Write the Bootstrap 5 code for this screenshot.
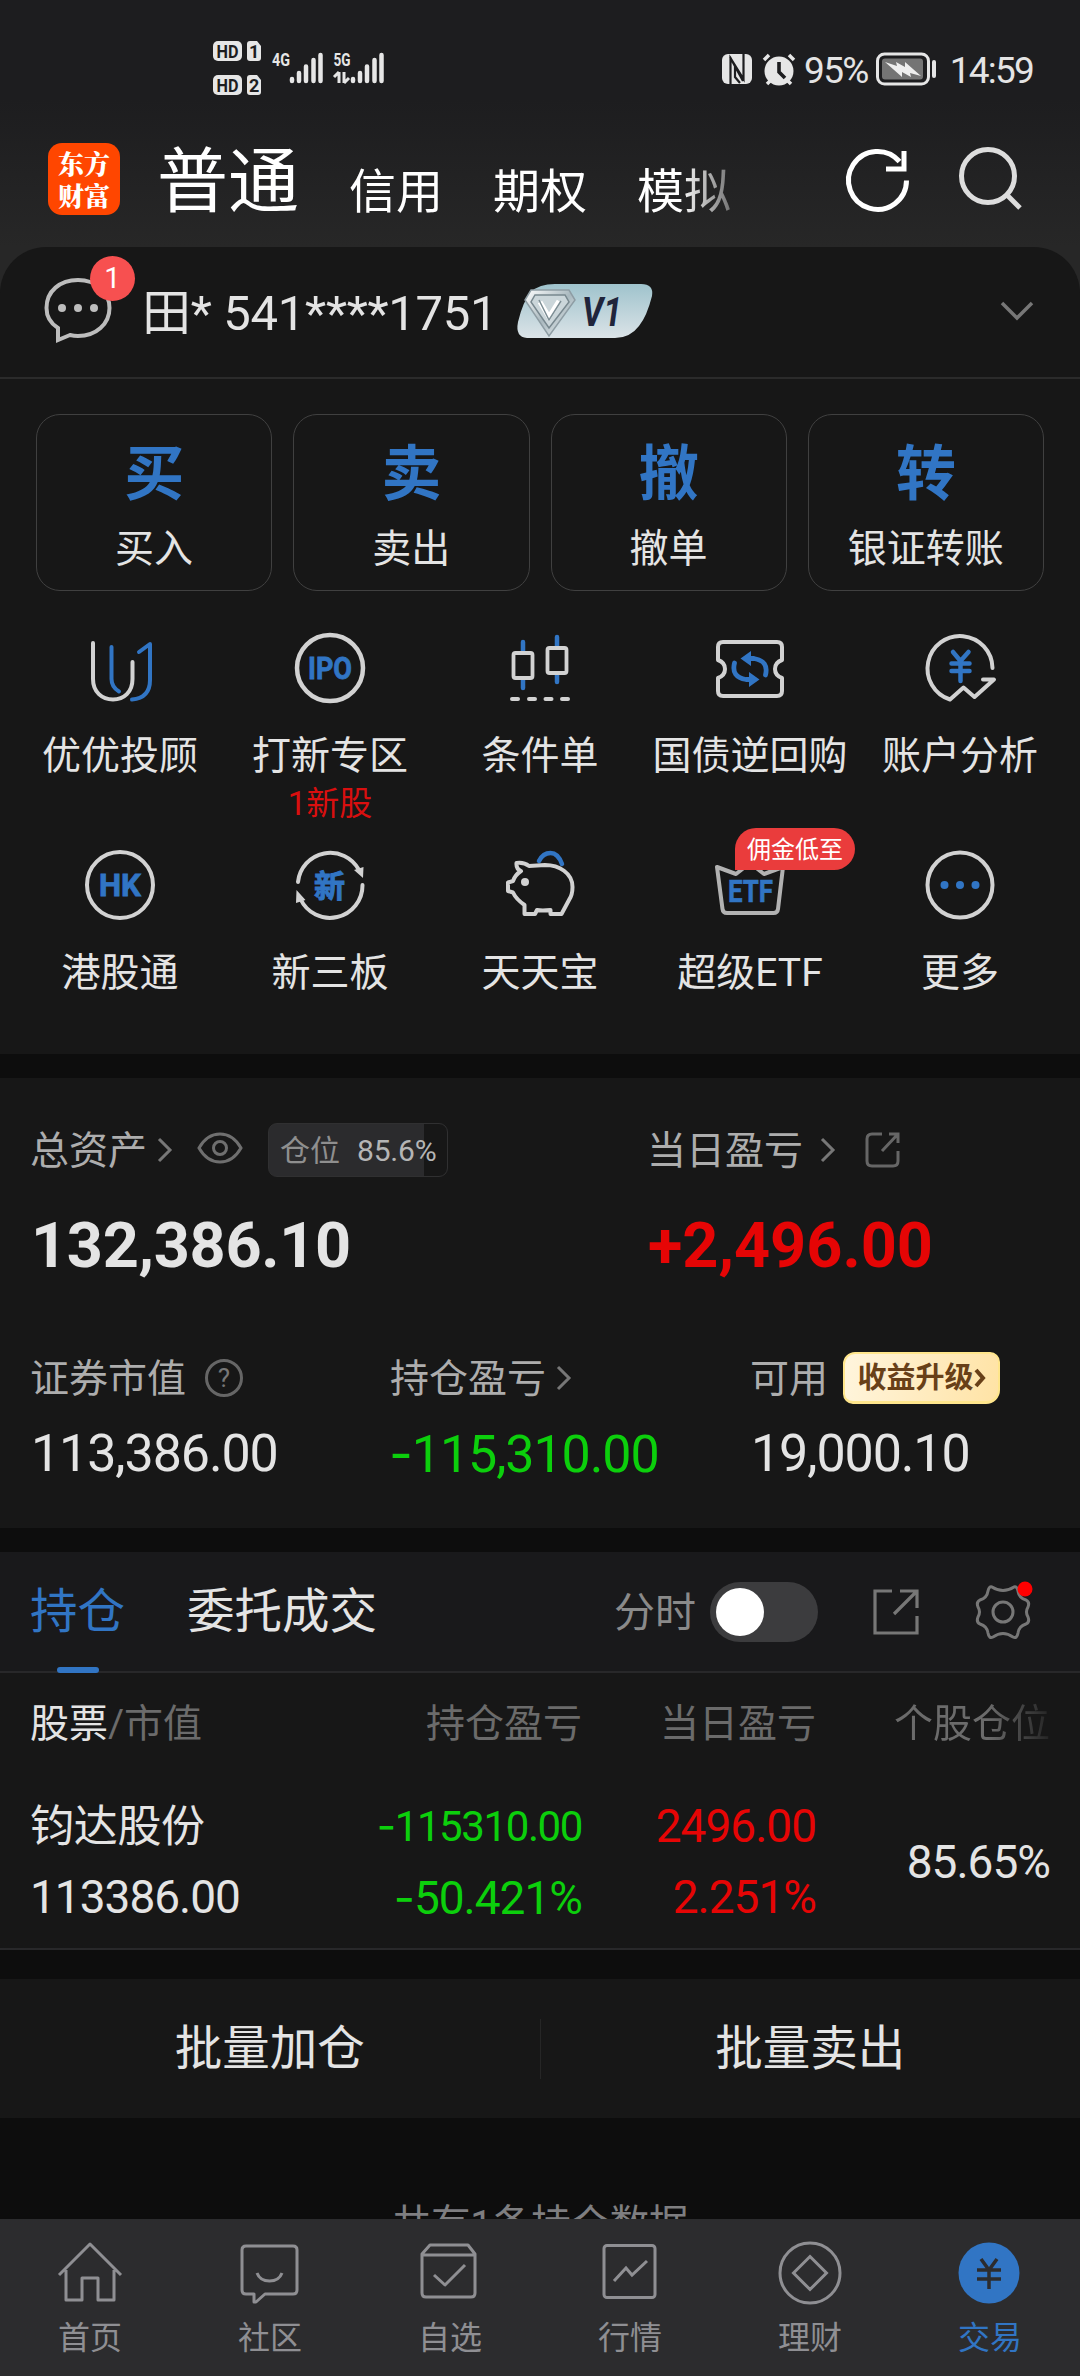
<!DOCTYPE html>
<html lang="zh-CN" data-bs-theme="dark">
<head>
<meta charset="utf-8">
<meta name="viewport" content="width=device-width, initial-scale=1">
<title>交易</title>
<link href="https://cdn.jsdelivr.net/npm/bootstrap@5.3.0/dist/css/bootstrap.min.css" rel="stylesheet">
<style>
:root{--blue:#3175c4;--txt:#e4e4e4;--label:#adadad;--dim:#6b6b6b;--up:#e60505;--down:#0ccf0c}
html{height:2376px;overflow:hidden}
body{background:#0d0d0d;color:var(--txt);font-family:Roboto,"Noto Sans CJK SC",sans-serif;line-height:1;width:1080px;height:2376px;overflow:hidden;white-space:nowrap}
svg{display:block;flex:none;overflow:visible;fill:none}
.screen{height:2376px}
.top-zone{background:linear-gradient(#1d1d1f 0,#1d1d1f 100px,#272727 247px);height:292px}
.status{height:110px;padding:24px 47px 0 213px;font-size:37px}
.brand-row{height:137px;padding:0 56px 0 48px}
.logo{width:72px;height:72px;margin-top:33px;border-radius:14px;background:#ff4600;color:#fff;font-family:"Noto Serif CJK SC","Noto Sans CJK SC",serif;font-weight:900;font-size:26px;padding:5px 0}
.logo span{line-height:30px;height:30px}
.tabs-mkt{padding-left:37px;gap:50px;width:612px;overflow:hidden;height:137px;color:#fff;font-size:47px;-webkit-mask-image:linear-gradient(90deg,#000 560px,transparent 640px)}
.tabs-mkt>span{padding-top:58px}
.tabs-mkt>.cur{font-size:71px;padding-top:36px}
.panel-a,.panel-b{background:#171717}
.panel-a{margin-top:-45px;border-radius:46px 46px 0 0;height:807px}
.acct{height:132px;border-bottom:2px solid #2b2b2b;padding:0 46px 0 44px}
.msg-dot{left:46px;top:-25px;width:45px;height:45px;background:#f75050;color:#fff;font-size:29px}
.acct-no{font-size:49px;padding:3px 0 0 30px;letter-spacing:-.3px}
.quick{padding:35px 36px 0;gap:21px}
.q-btn{height:177px;border:1.5px solid #404040;border-radius:24px;flex:1 1 0;padding-top:30px}
.q-btn b{font-size:60px;color:var(--blue);font-weight:700}
.q-btn span{font-size:39px;margin-top:25px}
.tools{padding:41px 15px 0}
.tool{width:210px;height:217px}
.tool .nm{font-size:39px;margin-top:33px}
.tool .sub{font-size:33px;margin-top:11px;color:#d90f0f}
.promo{left:90px;top:-21px;width:120px;height:42px;background:#ea3c3c;border-radius:21px 21px 21px 0;color:#fff;font-size:24px;padding-top:1px}
.ic-t{font-family:Roboto,"Noto Sans CJK SC",sans-serif;font-weight:700;fill:var(--blue);stroke:var(--blue)}
.assets{margin-top:24px;height:450px;padding:0 31px}
.lbl{font-size:39px;color:var(--label);padding-top:2px;margin-left:-1px}
.pos-chip{width:180px;height:54px;margin-left:25px;border:1.5px solid #303031;border-radius:9px;font-size:30px;color:#8f8f8f;padding:2px 0 0 11px;background:linear-gradient(90deg,#2b2b2d 155px,#171717 155px)}
.pos-chip i{font-style:normal;color:#b5b5b5;margin-left:17px;font-size:30px;letter-spacing:-.2px}
.big{font-size:63px;font-weight:700;letter-spacing:-.3px}
.mid{font-size:52px;letter-spacing:-1.1px}
.minus{font-family:Inter,sans-serif}
.up{color:var(--up)}.down{color:var(--down)}
.gain{width:157px;height:52px;margin-left:15px;border-radius:12px 10px 14px 10px;background:linear-gradient(100deg,#fff5dd,#ffe3a5);border:2px solid #ffe68c;border-bottom-width:3px;color:#684018;font-size:29px;font-weight:700;padding-top:1px}
.hold{margin-top:24px}
.hold-tabs{height:121px;background:#19191b;border-bottom:2px solid #28282a;padding:0 30px}
.hold-tabs .tb{font-size:47.5px;padding-top:3px}
.bar{left:27px;bottom:-36px;width:42px;height:6px;border-radius:3px;background:var(--blue)}
.sw{width:108px;height:60px;border-radius:30px;background:#3c3c3e;padding:6px;margin-left:14px}
.sw div{width:48px;height:48px;border-radius:50%;background:#fff}
.g-row{display:grid;grid-template-columns:251px 301px 234px 234px;padding-left:30px}
.g-head{height:102px;font-size:39px;color:var(--dim);align-items:center}
.fade-r{-webkit-mask-image:linear-gradient(90deg,#000 60%,transparent 108%)}
.g-body{height:175px;border-bottom:2px solid #28282a;font-size:46px;letter-spacing:-1px}
.g-body>div{padding-top:28px}
.g-body .l2{margin-top:25px}
.batch{margin-top:29px;height:139px;font-size:47.5px}
.batch .flex-fill{padding-top:2px}
.batch .vr-l{width:1px;height:60px;background:#262626}
.foot-note{height:101px;padding-top:87px;font-size:39.5px;color:#7e7e80;letter-spacing:-.3px}
.bottom-nav{height:157px;background:#2c2c2e;position:relative}
.bottom-nav .it{width:180px;padding-top:22px;font-size:32px;color:#8f8f93}
.bottom-nav .it span{margin-top:17px}
.bottom-nav .it.on{color:var(--blue)}
</style>
<script src="https://cdn.jsdelivr.net/npm/bootstrap@5.3.0/dist/js/bootstrap.bundle.min.js"></script>
</head>
<body>
<div class="screen d-flex flex-column overflow-hidden">
<header class="top-zone flex-shrink-0">
  <div class="status d-flex justify-content-between">
    <svg width="176" height="90" viewBox="0 0 176 90">
      <g fill="#e6e6e6"><rect x="0" y="17" width="29" height="20" rx="5"/><path d="M37 17h7l4 5v12q0 3-3 3h-8q-3 0-3-3V20q0-3 3-3z"/><rect x="0" y="51" width="29" height="20" rx="5"/><path d="M37 51h7l4 5v12q0 3-3 3h-8q-3 0-3-3V54q0-3 3-3z"/></g>
      <g font-family="Roboto" font-weight="700" font-size="18" fill="#1d1d1f"><text x="3.500" y="33.500" textLength="22" lengthAdjust="spacingAndGlyphs">HD</text><text x="36" y="33.500">1</text><text x="3.500" y="67.500" textLength="22" lengthAdjust="spacingAndGlyphs">HD</text><text x="36" y="67.500">2</text></g>
      <g font-family="Roboto" font-weight="700" font-size="19" fill="#e6e6e6"><text x="59" y="42" textLength="18" lengthAdjust="spacingAndGlyphs">4G</text><text x="120.500" y="42" textLength="17" lengthAdjust="spacingAndGlyphs">5G</text></g>
      <g stroke="#e6e6e6" stroke-width="4.500" stroke-linecap="round"><path d="M79 55v2M86 49v8M93 42.500v14.500M100.500 36v21M107.500 31v26M140 55v2M147 49v8M154 42.500v14.500M161.500 36v21M168.500 31v26"/></g>
      <path d="M126 48v11M121 53l5-5M131 48v11M131 59l5-5" stroke="#e6e6e6" stroke-width="3"/>
    </svg>
    <div class="d-flex align-items-center" style="height:90px">
      <svg width="30" height="30" viewBox="0 0 30 30"><rect width="30" height="30" rx="6" fill="#e6e6e6"/><path d="M8.500 30V4l13 21V0M8 3l13 24M13 12v11l5 6" stroke="#1d1d1f" stroke-width="2.200"/></svg>
      <svg class="ms-2" width="38" height="34" viewBox="0 0 38 34"><circle cx="19" cy="19" r="14.500" fill="#e6e6e6"/><path d="M4 8l5-5M34 8l-5-5M7 32l4-4M31 32l-4-4" stroke="#e6e6e6" stroke-width="3.500"/><path d="M19 10v10l6 6" stroke="#1d1d1f" stroke-width="3.600"/></svg>
      <span style="margin-left:6px;letter-spacing:-1.6px;padding-top:3px">95%</span>
      <svg style="margin-left:8px" width="62" height="34" viewBox="0 0 62 34"><rect x="1.500" y="2" width="51" height="30" rx="7" stroke="#e6e6e6" stroke-width="3"/><rect x="6" y="6.500" width="41" height="21" rx="3" fill="#747474"/><path d="M9 10l12 4-1-4 9 5v-5l16 14-11-3 1 4-9-5v5z" fill="#eee"/><path d="M58 10v14" stroke="#e6e6e6" stroke-width="4" stroke-linecap="round"/></svg>
      <span style="margin-left:12px;letter-spacing:-1.8px;padding-top:3px">14:59</span>
    </div>
  </div>
  <div class="brand-row d-flex">
    <div class="logo d-flex flex-column align-items-center justify-content-between flex-shrink-0"><span>东方</span><span>财富</span></div>
    <div class="tabs-mkt d-flex flex-shrink-0"><span class="cur">普通</span><span>信用</span><span>期权</span><span>模拟</span></div>
    <svg class="ms-auto" width="182" height="80" viewBox="0 0 182 80" style="margin-top:30px">
      <path d="M64.500 40.500a29 29 0 1 1-7-19" stroke="#fff" stroke-width="5"/><path d="M62 11v18H44" stroke="#fff" stroke-width="5"/>
      <circle cx="146" cy="36" r="26.500" stroke="#ddd" stroke-width="5"/><path d="M165 55l13 13" stroke="#ddd" stroke-width="5"/>
    </svg>
  </div>
</header>

<section class="panel-a flex-shrink-0">
  <div class="acct d-flex align-items-center">
    <div class="position-relative">
      <svg width="68" height="66" viewBox="0 0 68 66" style="margin-top:-4px"><path d="M14 63V51C6 46 2.500 39 2.500 31 2.500 14 16 3 34 3S65.500 15 65.500 31 52 59 34 59q-4 0-8-1z" stroke="#bdbdbd" stroke-width="4"/><g fill="#bdbdbd"><circle cx="18" cy="31" r="4"/><circle cx="34" cy="31" r="4"/><circle cx="50" cy="31" r="4"/></g></svg>
      <div class="msg-dot position-absolute rounded-circle d-flex align-items-center justify-content-center">1</div>
    </div>
    <div class="acct-no">田* 541****1751</div>
    <svg style="margin-left:20px;margin-top:-2px" width="136" height="54" viewBox="0 0 136 54">
      <defs><linearGradient id="v" x2="0" y2="1"><stop stop-color="#9fc3cc"/><stop offset="1" stop-color="#dbe3e7"/></linearGradient><linearGradient id="d" x2="1" y2="1"><stop stop-color="#fff"/><stop offset=".5" stop-color="#a9b8be"/><stop offset="1" stop-color="#eef3f5"/></linearGradient></defs>
      <path d="M38 0h86q13 0 11 12-5 20-13 30-9 12-24 12H10Q-2 53 1 38 6 17 14 8q8-8 24-8z" fill="url(#v)"/>
      <path d="M14 6h38l6 10-26 36L8 16z" fill="url(#d)" stroke="#8e9da4" stroke-width="1.500"/><path d="M18 11h30l4 7-20 26-18-26z" fill="#cbd6da" stroke="#78888f" stroke-width="1.500"/><path d="M23 18l9 15 10-16" stroke="#fff" stroke-width="5"/><path d="M22 16l10 20 12-19" stroke="#7d8e95" stroke-width="1.500"/>
      <text x="65" y="42" font-family="Roboto" font-size="40" font-weight="700" font-style="italic" fill="#20253b" textLength="40" lengthAdjust="spacingAndGlyphs">V1</text>
    </svg>
    <svg class="ms-auto" width="34" height="22" viewBox="0 0 34 22" style="margin-top:-3px"><path d="M2 3l15 15L32 3" stroke="#777" stroke-width="3.500"/></svg>
  </div>
  <div class="quick d-flex">
    <div class="q-btn d-flex flex-column align-items-center"><b>买</b><span>买入</span></div>
    <div class="q-btn d-flex flex-column align-items-center"><b>卖</b><span>卖出</span></div>
    <div class="q-btn d-flex flex-column align-items-center"><b>撤</b><span>撤单</span></div>
    <div class="q-btn d-flex flex-column align-items-center"><b>转</b><span>银证转账</span></div>
  </div>
  <div class="tools d-flex flex-wrap">
    <div class="tool d-flex flex-column align-items-center"><svg width="72" height="72" stroke-width="4" stroke-linecap="round" stroke-linejoin="round"><path stroke="#3175c4" d="M27.500 15v32q0 8 7.500 12.500M48 67.500Q66 66 66 48V12L55 20"/><path stroke="#d2d2d2" d="M9 11v36C9 60 18 67.500 29 67.500S48.500 60 48.500 47V30"/></svg><span class="nm">优优投顾</span></div>
    <div class="tool d-flex flex-column align-items-center"><svg width="72" height="72"><circle cx="36" cy="36" r="33" stroke="#d2d2d2" stroke-width="4.500"/><text class="ic-t" x="14" y="47" font-size="31" stroke-width=".8" textLength="44" lengthAdjust="spacingAndGlyphs">IPO</text></svg><span class="nm">打新专区</span><span class="sub">1新股</span></div>
    <div class="tool d-flex flex-column align-items-center"><svg width="72" height="72" stroke-width="4.500"><path stroke="#3175c4" stroke-linecap="round" d="M19 10v9M19 48v8M53 5v9M53 42v8"/><path stroke="#d2d2d2" stroke-linecap="round" stroke-width="4" d="M8 67h6M25 67h6M41.500 67h6M58 67h6"/><g stroke="#d2d2d2" stroke-width="3.800"><rect x="9.500" y="21" width="19" height="25" rx="2"/><rect x="43.500" y="16" width="19" height="25" rx="2"/></g></svg><span class="nm">条件单</span></div>
    <div class="tool d-flex flex-column align-items-center"><svg width="72" height="72"><path stroke="#d2d2d2" stroke-width="4" stroke-linejoin="round" d="M9 10h54q5 0 5 5v13q-7 2.500-7 9t7 9v13q0 5-5 5H9q-5 0-5-5V46q7-2.500 7-9t-7-9V15q0-5 5-5z"/><g stroke="#3175c4" stroke-width="4.800" stroke-linecap="round"><path d="M33 26.500h7Q55 29 51.500 43M39 47.500h-7Q17 45 20.500 31"/></g><path fill="#3175c4" d="M26.500 26.500L37 19v15zM45.500 47.500L35 40v15z"/></svg><span class="nm">国债逆回购</span></div>
    <div class="tool d-flex flex-column align-items-center"><svg width="72" height="72"><path stroke="#d2d2d2" stroke-width="4" stroke-linecap="round" stroke-linejoin="round" d="M68.500 36A32.500 32.500 0 1 0 26 67.500L39.500 55.500 50.500 65 70 47.500H59"/><path stroke="#3175c4" stroke-width="4.500" stroke-linecap="round" d="M29 20l7.500 9 8-9M36.500 29v20M27.500 31.500h18M27.500 39h18"/></svg><span class="nm">账户分析</span></div>
    <div class="tool d-flex flex-column align-items-center"><svg width="72" height="72"><circle cx="36" cy="36" r="33" stroke="#d2d2d2" stroke-width="4"/><text class="ic-t" x="15" y="47" font-size="31" stroke-width=".8" textLength="42" lengthAdjust="spacingAndGlyphs">HK</text></svg><span class="nm">港股通</span></div>
    <div class="tool d-flex flex-column align-items-center"><svg width="72" height="72"><path stroke="#d2d2d2" stroke-width="4" stroke-linecap="round" d="M4 33A32.500 32.500 0 0 1 65 21M68.500 36A32.500 32.500 0 0 1 6.500 50"/><path fill="#d2d2d2" d="M60 21l9.500-3-.5 11zM11.500 51L2 54l.5-13z"/><text class="ic-t" x="20" y="48" font-size="31" stroke-width="1">新</text></svg><span class="nm">新三板</span></div>
    <div class="tool d-flex flex-column align-items-center"><svg width="72" height="72"><path stroke="#3175c4" stroke-width="4.500" stroke-linecap="round" d="M35 12Q39 4 46.500 4T58 15"/><path stroke="#d2d2d2" stroke-width="4" stroke-linejoin="round" d="M12.500 14Q20 13 25 17L41 16C55 16 68.500 24 68.500 38Q68.500 46 65 51L57.500 65H46.500V61Q38 62 33 61L31 65H20.500V56Q12 50 9 43.500L4 42V33.500L9 32Q11 26 17 22Q12 20 12.500 14Z"/><circle cx="21" cy="33" r="4" fill="#d2d2d2"/></svg><span class="nm">天天宝</span></div>
    <div class="tool position-relative d-flex flex-column align-items-center"><svg width="72" height="72"><path stroke="#b2b2b2" stroke-width="4" stroke-linejoin="round" d="M3 18l19 7 14-11 14 11 19-7-5 42q-.5 4-4.500 4H13q-4 0-4.500-4z"/><text class="ic-t" x="14" y="53" font-size="31" stroke-width=".6" textLength="45" lengthAdjust="spacingAndGlyphs">ETF</text></svg><span class="promo position-absolute d-flex align-items-center justify-content-center">佣金低至</span><span class="nm">超级ETF</span></div>
    <div class="tool d-flex flex-column align-items-center"><svg width="72" height="72"><circle cx="36" cy="36" r="32.500" stroke="#d2d2d2" stroke-width="4"/><g fill="#3175c4"><circle cx="20.500" cy="36" r="4"/><circle cx="36" cy="36" r="4"/><circle cx="51.500" cy="36" r="4"/></g></svg><span class="nm">更多</span></div>
  </div>
</section>

<section class="panel-b assets flex-shrink-0">
  <div class="d-flex" style="padding-top:44px">
    <div style="width:617px">
      <div class="d-flex align-items-center" style="height:56px">
        <span class="lbl">总资产</span>
        <svg style="margin-left:10px" width="16" height="28"><path d="M2 3l11 11L2 25" stroke="#777" stroke-width="3"/></svg>
        <svg style="margin-left:24px;margin-top:-3px" width="46" height="34"><path d="M2 16Q10 2 23 2T44 16Q36 30 23 30T2 16Z" stroke="#6f6f6f" stroke-width="3"/><circle cx="23" cy="16" r="6.500" stroke="#6f6f6f" stroke-width="3"/></svg>
        <span class="pos-chip d-flex align-items-center">仓位<i>85.6%</i></span>
      </div>
      <div class="big" style="margin-top:36px">132,386.10</div>
    </div>
    <div>
      <div class="d-flex align-items-center" style="height:56px">
        <span class="lbl">当日盈亏</span>
        <svg style="margin-left:17px" width="16" height="28"><path d="M2 3l11 11L2 25" stroke="#777" stroke-width="3"/></svg>
        <svg style="margin-left:29px" width="36" height="36"><path d="M17 2H7Q2 2 2 7V29Q2 34 7 34H28Q33 34 33 29V19M24 2h9v9M33 2L17 19" stroke="#666" stroke-width="3"/></svg>
      </div>
      <div class="big up" style="margin-top:36px;letter-spacing:0">+2,496.00</div>
    </div>
  </div>
  <div class="d-flex" style="padding-top:74px">
    <div style="width:360px">
      <div class="d-flex align-items-center" style="height:54px"><span class="lbl">证券市值</span><svg style="margin-left:18px" width="40" height="40"><circle cx="20" cy="20" r="17.500" stroke="#666" stroke-width="3"/><text x="20" y="29" text-anchor="middle" font-family="Roboto" font-size="26" fill="#777">?</text></svg></div>
      <div class="mid" style="margin-top:23px">113,386.00</div>
    </div>
    <div style="width:360px">
      <div class="d-flex align-items-center" style="height:54px"><span class="lbl">持仓盈亏</span><svg style="margin-left:10px" width="16" height="28"><path d="M2 3l11 11L2 25" stroke="#777" stroke-width="3"/></svg></div>
      <div class="mid down" style="margin-top:23px;margin-left:-2px"><span class="minus">-</span>115,310.00</div>
    </div>
    <div>
      <div class="d-flex align-items-center" style="height:54px"><span class="lbl">可用</span><span class="gain d-flex align-items-center justify-content-center">收益升级<svg width="12" height="24"><path d="M2 4l7 8-7 8" stroke="#684018" stroke-width="4"/></svg></span></div>
      <div class="mid" style="margin-top:23px">19,000.10</div>
    </div>
  </div>
</section>

<section class="panel-b hold flex-shrink-0">
  <div class="hold-tabs d-flex align-items-center">
    <span class="tb position-relative" style="color:var(--blue)">持仓<i class="bar position-absolute"></i></span>
    <span class="tb" style="margin-left:62px">委托成交</span>
    <span class="ms-auto" style="font-size:41px;color:#8a8a8a;padding-top:3px">分时</span>
    <div class="sw"><div></div></div>
    <svg style="margin-left:54px" width="48" height="48"><path d="M20 3H3V45H45V28M28 3H45V20M45 3L22 26" stroke="#777" stroke-width="3.200"/></svg>
    <svg style="margin-left:55px;margin-right:19px" width="56" height="60"><path d="M17 5Q28 12 39 5Q42 4 43 9Q44 16 51 18Q55 20 53 25Q50 30 53 35Q55 40 51 42Q44 44 43 51Q42 57 38 55Q28 48 18 55Q14 57 13 51Q12 44 5 42Q1 40 3 35Q6 30 3 25Q1 20 5 18Q12 16 13 9Q14 4 17 5Z" stroke="#777" stroke-width="3"/><circle cx="28" cy="30" r="10" stroke="#777" stroke-width="3"/><circle cx="50" cy="7" r="7.500" fill="#f00"/></svg>
  </div>
  <div class="g-row g-head">
    <div><span style="color:var(--txt)">股票</span>/市值</div><div class="text-end">持仓盈亏</div><div class="text-end">当日盈亏</div><div class="text-end"><span class="fade-r">个股仓位</span></div>
  </div>
  <div class="g-row g-body">
    <div><div style="font-size:44px;height:46px;line-height:48px;letter-spacing:-.3px">钧达股份</div><div class="l2">113386.00</div></div>
    <div class="text-end down"><div style="font-size:42px;height:46px;line-height:46px;letter-spacing:-1.4px"><span class="minus">-</span>115310.00</div><div class="l2"><span class="minus">-</span>50.421%</div></div>
    <div class="text-end up"><div>2496.00</div><div class="l2">2.251%</div></div>
    <div class="text-end" style="padding-top:64px">85.65%</div>
  </div>
</section>

<section class="panel-b batch d-flex align-items-center flex-shrink-0">
  <div class="flex-fill text-center">批量加仓</div><div class="vr-l"></div><div class="flex-fill text-center">批量卖出</div>
</section>
<div class="foot-note text-center flex-shrink-0">共有1条持仓数据</div>

<nav class="bottom-nav d-flex flex-shrink-0">
  <div class="it d-flex flex-column align-items-center"><svg width="64" height="64" stroke="#8f8f93" stroke-width="3"><path d="M1 34L32 3l31 31M8 29V59H24V37H40V59H56V29" stroke-linejoin="round"/></svg><span>首页</span></div>
  <div class="it d-flex flex-column align-items-center"><svg width="64" height="64" stroke="#8f8f93" stroke-width="3"><path d="M8 5H55Q59 5 59 9V49Q59 53 55 53H27L18 61H16V53H8Q4 53 4 49V9Q4 5 8 5ZM19 32q3 8 12.500 8T44 32" stroke-linejoin="round"/></svg><span>社区</span></div>
  <div class="it d-flex flex-column align-items-center"><svg width="64" height="64" stroke="#8f8f93" stroke-width="3"><path d="M12 4H50L57 13V52Q57 56 53 56H8Q4 56 4 52V13ZM4 14H57M16 34L27 44 47 24" stroke-linejoin="round"/></svg><span>自选</span></div>
  <div class="it d-flex flex-column align-items-center"><svg width="64" height="64" stroke="#8f8f93" stroke-width="3"><rect x="6" y="4.500" width="51" height="52" rx="3"/><path d="M16 40L28 27 34 34 49 20"/></svg><span>行情</span></div>
  <div class="it d-flex flex-column align-items-center"><svg width="64" height="64" stroke="#8f8f93" stroke-width="3"><circle cx="32" cy="32" r="30"/><path d="M32 15.500L48.500 32 32 48.500 15.500 32Z"/></svg><span>理财</span></div>
  <div class="it on d-flex flex-column align-items-center"><svg width="64" height="64"><circle cx="31" cy="32" r="30.500" fill="#3175c4"/><path d="M23 18l8 11 8-11M31 29v19M19 29h24M19 38h24" stroke="#2c2c2e" stroke-width="3.500"/></svg><span>交易</span></div>
</nav>
</div>
</body>
</html>
